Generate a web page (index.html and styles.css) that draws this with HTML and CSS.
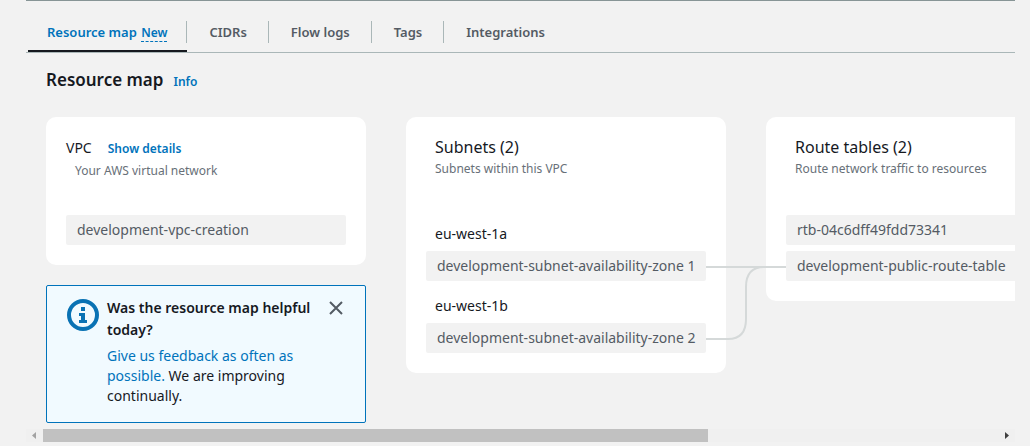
FILE: index.html
```html
<!DOCTYPE html>
<html lang="en">
<head>
<meta charset="utf-8">
<title>Resource map</title>
<link rel="stylesheet" href="styles.css">
</head>
<body>
<main class="panel">
  <nav class="tabs" aria-label="VPC sections">
    <a class="tab tab-active" href="#map" aria-current="page">Resource map <span class="new">New</span></a>
    <a class="tab" href="#cidrs">CIDRs</a>
    <a class="tab" href="#logs">Flow logs</a>
    <a class="tab" href="#tags">Tags</a>
    <a class="tab" href="#integrations">Integrations</a>
  </nav>
  <header class="heading">
    <h1>Resource map</h1>
    <a class="info" href="#info">Info</a>
  </header>
  <div class="map" id="map">
    <div class="column">
      <section class="card">
        <div class="card-head">
          <div class="vpc-title"><h2>VPC</h2><a class="info" href="#details">Show details</a></div>
          <p class="vpc-sub">Your AWS virtual network</p>
        </div>
        <div class="resource">development-vpc-creation</div>
      </section>
      <aside class="feedback">
        <svg class="feedback-icon" viewBox="0 0 32 32" aria-hidden="true">
          <circle cx="16" cy="16" r="14" fill="none" stroke="#0972b4" stroke-width="4"/>
          <path fill="#0972b4" d="M14 8h4v4h-4zM12 14h6v7h2v3h-8v-3h2v-4h-2z"/>
        </svg>
        <div class="feedback-body">
          <h2>Was the resource map helpful today?</h2>
          <p><a href="#feedback">Give us feedback as often as possible.</a> We are improving continually.</p>
        </div>
        <button class="close" type="button" aria-label="Dismiss">
          <svg viewBox="0 0 14 14" aria-hidden="true"><path d="M1 1l12 12M13 1L1 13" stroke="#545b64" stroke-width="2" fill="none"/></svg>
        </button>
      </aside>
    </div>
    <section class="card column linked">
      <div class="card-head inset">
        <h2>Subnets (2)</h2>
        <p>Subnets within this VPC</p>
      </div>
      <h3>eu-west-1a</h3>
      <div class="resource">development-subnet-availability-zone 1</div>
      <h3>eu-west-1b</h3>
      <div class="resource">development-subnet-availability-zone 2</div>
      <svg class="links" viewBox="0 0 80 80" aria-hidden="true">
        <path d="M0 5H80M0 77H22Q40 77 40 57V25Q40 5 58 5" fill="none" stroke="#d5d9d9" stroke-width="2"/>
      </svg>
    </section>
    <section class="card column">
      <div class="card-head inset">
        <h2>Route tables (2)</h2>
        <p>Route network traffic to resources</p>
      </div>
      <div class="resource">rtb-04c6dff49fdd73341</div>
      <div class="resource">development-public-route-table</div>
    </section>
  </div>
  <div class="scrollbar" aria-hidden="true">
    <svg class="arrow" viewBox="0 0 17 13"><path d="M10 3v7L6 6.500z" fill="#a3a3a3"/></svg>
    <div class="track"><div class="thumb"></div></div>
    <svg class="arrow" viewBox="0 0 17 13"><path d="M7 3v7l4-3.500z" fill="#404040"/></svg>
  </div>
</main>
</body>
</html>
```
FILE: styles.css
```css
* { box-sizing: border-box; }
body {
  margin: 0;
  background: #f2f2f2;
  color: #16191f;
  font: 14px/20px "Noto Sans", "Open Sans", sans-serif;
}
h1, h2, h3, p { margin: 0; font-weight: 400; }
a { color: #0073bb; text-decoration: none; }
.panel { margin: 0 15px 0 26px; border-top: 1px solid #879596; }
.tabs {
  display: flex;
  height: 52px;
  padding: 10px 0 0 2px;
  border-bottom: 1px solid #aab7b8;
}
.tab {
  position: relative;
  padding: 11px 22px 10px;
  font-size: 13px;
  font-weight: 600;
  color: #545b64;
}
.tab:not(:last-child)::after {
  content: "";
  position: absolute;
  right: 0;
  top: 10px;
  height: 22px;
  border-right: 1px solid #aab7b8;
}
.tab-active { padding: 11px 20px 8px 19px; color: #0073bb; border-bottom: 2px solid #16191f; }
.new { display: inline-block; margin-left: 1px; font-size: 12px; line-height: 16px; border-bottom: 1px dashed #0073bb; }
.heading { display: flex; align-items: baseline; gap: 10px; padding: 14px 20px 25px; }
h1 { font-size: 17px; line-height: 25px; font-weight: 600; }
.info { font-size: 12px; font-weight: 600; }
.map { display: flex; align-items: flex-start; gap: 40px; padding-left: 20px; overflow: hidden; }
.column { flex: 0 0 320px; min-width: 0; }
.card { padding: 20px; background: #fff; border-radius: 10px; }
.card-head { height: 78px; }
.inset { padding-left: 9px; }
.card-head h2 { font-size: 16px; line-height: 20px; }
.card-head p { padding-top: 2px; font-size: 12px; color: #687078; }
.vpc-title { display: flex; align-items: baseline; gap: 16px; }
.card-head .vpc-title h2 { font-size: 14px; line-height: 22px; }
.card-head .vpc-sub { padding: 2px 9px; }
.resource {
  height: 30px;
  padding: 5px 11px;
  border-radius: 2px;
  background: #f2f2f2;
  color: #545b64;
  white-space: nowrap;
}
.resource + .resource { margin-top: 6px; }
h3 { padding: 9px 9px 7px; font-size: 14px; line-height: 20px; }
.resource + h3 { padding-top: 15px; }
.linked { position: relative; }
.links { position: absolute; left: 300px; top: 145px; width: 80px; height: 80px; }
.feedback {
  display: flex;
  gap: 8px;
  margin-top: 20px;
  padding: 11px 20px 16px;
  border: 1px solid #0073bb;
  border-radius: 2px;
  background: #f1faff;
}
.feedback-icon { flex: none; width: 32px; height: 32px; margin-top: 2px; }
.feedback-body { flex: 1; }
.feedback h2 { font-size: 14px; line-height: 22px; font-weight: 600; }
.feedback p { margin-top: 5px; }
.close { flex: none; width: 18px; height: 20px; margin-top: 1px; padding: 0; border: 0; background: none; cursor: pointer; }
.close svg { display: block; width: 14px; height: 14px; margin: auto; }
.scrollbar { display: flex; height: 13px; margin-top: 6px; background: #f0f0f0; }
.arrow { flex: none; width: 17px; height: 13px; }
.track { flex: 1; }
.thumb { width: 69.6%; height: 13px; background: #c1c1c1; }
```
